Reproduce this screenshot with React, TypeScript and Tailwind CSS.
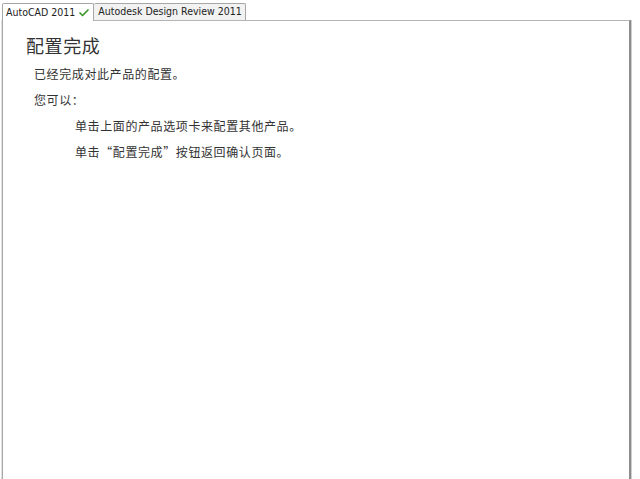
import { Check } from 'lucide-react'

const cjk = { fontFamily: '"Noto Sans CJK SC", sans-serif' }
const tabFont = { fontFamily: '"DejaVu Sans Condensed", "DejaVu Sans", sans-serif' }

export default function App() {
  return (
    <div className="flex h-[479px] w-[640px] flex-col overflow-hidden bg-white pl-[2px] pt-[3px]">
      <div className="flex items-end whitespace-nowrap" style={tabFont}>
        <div className="relative z-10 -mb-px flex h-[18px] items-center gap-[3px] rounded-t-[2px] border border-b-0 border-[#a7a7a7] bg-white pl-[3px] pr-[3px] text-[10.5px] text-[#222]">
          <span>AutoCAD 2011</span>
          <Check size={12} strokeWidth={3.5} className="text-[#3a9a2a]" />
        </div>
        <div className="flex h-[17px] items-center rounded-t-[2px] border border-b-0 border-l-0 border-[#a7a7a7] bg-[#f2f2f2] pl-[4px] pr-[3px] text-[10.5px] text-[#222]">
          Autodesk Design Review 2011
        </div>
      </div>
      <div
        className="w-[629px] flex-1 border-l border-r-2 border-t border-l-[#a7a7a7] border-r-[#8c8c8c] border-t-[#b5b5b5] bg-white shadow-[1px_0_0_#cfcfcf,-1px_0_0_#e0e0e0] text-[#333]"
        style={cjk}
      >
        <div className="pl-[23px] pt-[12px]">
          <h1 className="text-[18px] leading-[24px] tracking-[0.6px] text-[#333]">配置完成</h1>
          <div className="pl-[8px] text-[12px] tracking-[0.6px]">
            <p className="mt-[9px] leading-[16px]">已经完成对此产品的配置。</p>
            <p className="mt-[10px] leading-[16px]">您可以：</p>
            <div className="pl-[41px]">
              <p className="mt-[10px] leading-[16px]">单击上面的产品选项卡来配置其他产品。</p>
              <p className="mt-[10px] leading-[16px]">单击“配置完成”按钮返回确认页面。</p>
            </div>
          </div>
        </div>
      </div>
    </div>
  )
}
